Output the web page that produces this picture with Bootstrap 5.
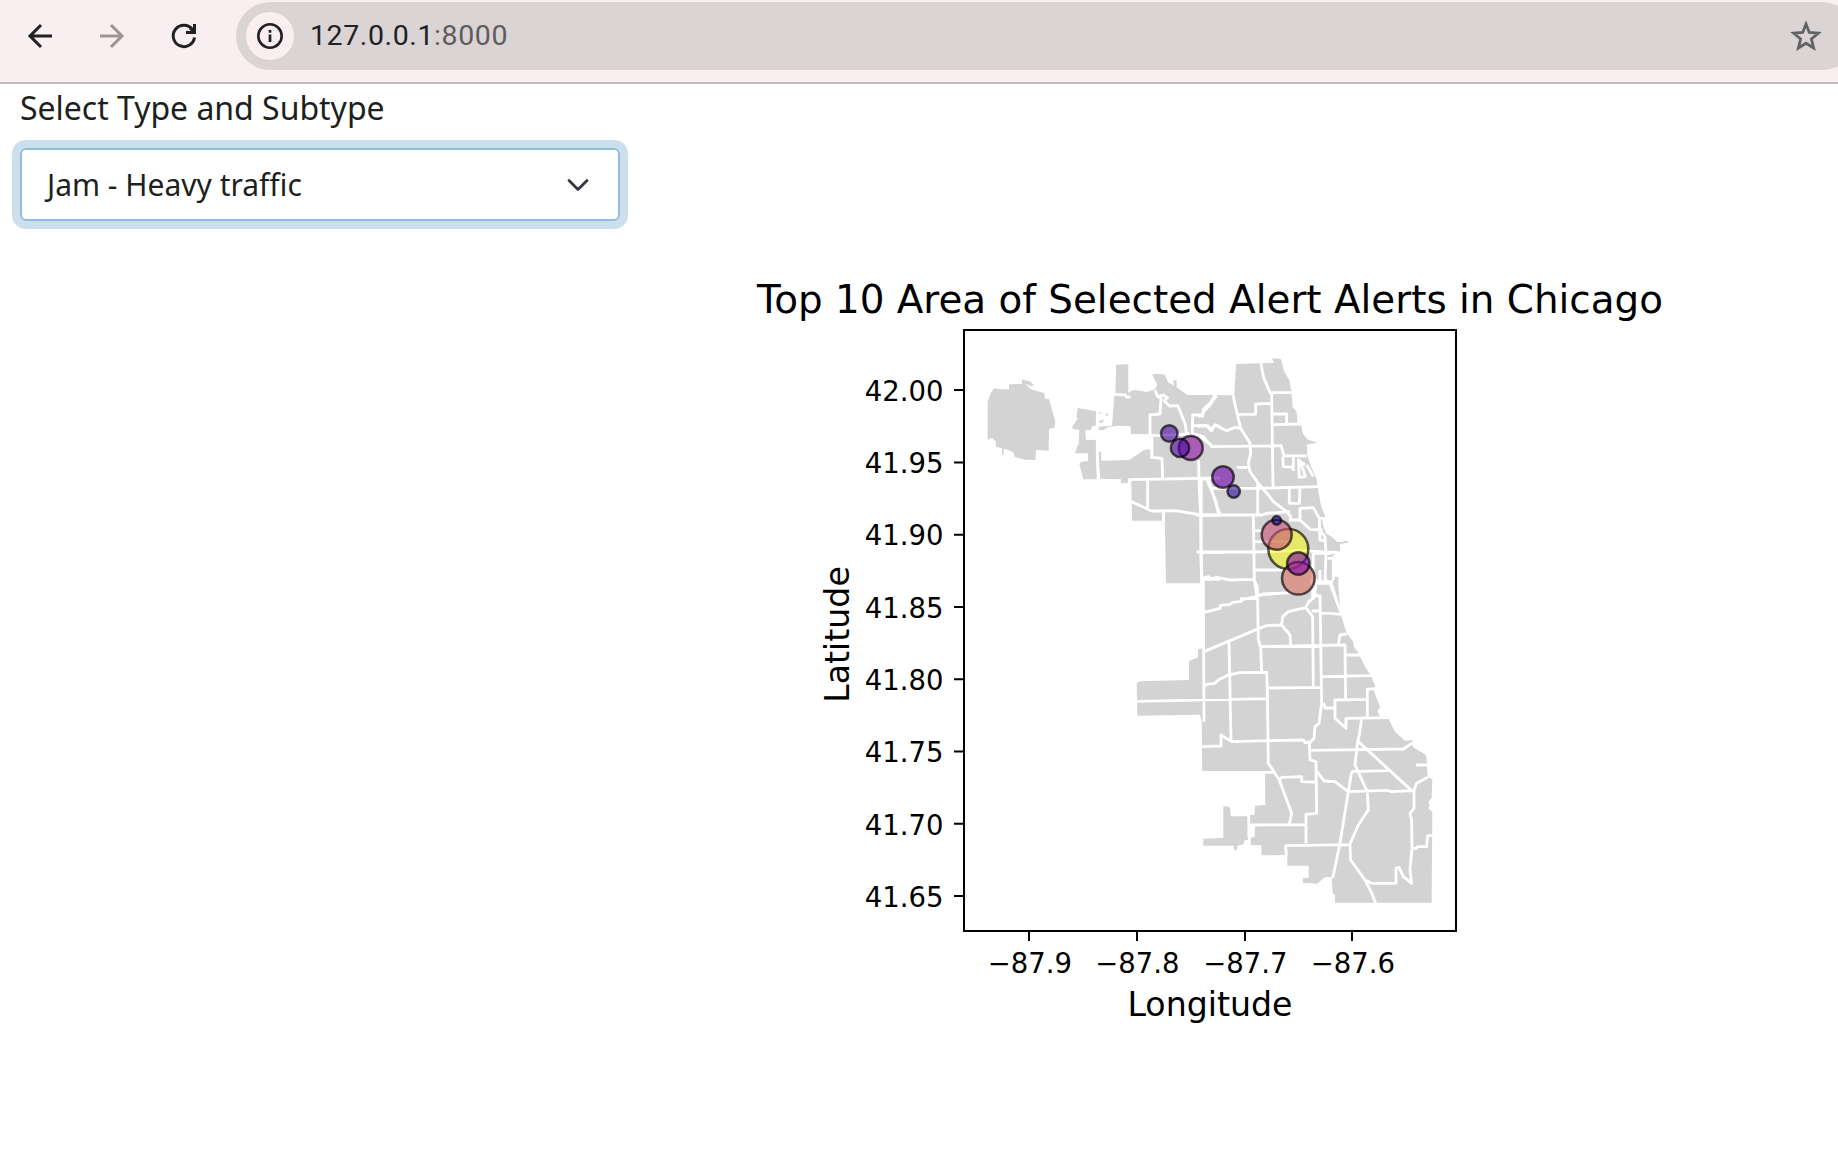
<!DOCTYPE html>
<html lang="en">
<head>
<meta charset="utf-8">
<meta name="viewport" content="width=device-width, initial-scale=1">
<title>127.0.0.1:8000</title>
<link href="https://cdn.jsdelivr.net/npm/bootstrap@5.3.0/dist/css/bootstrap.min.css" rel="stylesheet">
<style>
body{background:#fff;color:#1d1f21;font-family:"Noto Sans","Open Sans",sans-serif;width:1838px;height:1150px;overflow:hidden}
.toolbar{height:84px;background:#f9eff0;border-bottom:2px solid #c2bcbc;padding:2px 0 0 20px;overflow:hidden}
.tool-icon{width:40px;height:40px;margin-top:14px;flex:none}
.tool-next{margin-left:32px}
.address{width:1620px;height:68px;border-radius:34px;background:#dad4d4;flex:none;margin-left:32px;padding:0 34px 0 10px}
.site-info{width:48px;height:48px;background:#f9eff0;flex:none}
.url-text{font:28.500px/34px Roboto,sans-serif;letter-spacing:.6px;margin-left:16px;color:#202124}
.url-text span{color:#5f5c5d}
.type-label{font-size:32px;line-height:44px;padding-left:20px;margin-top:2px;letter-spacing:-.02px}
.type-select{width:600px;height:73px;margin:18px 0 0 20px;border:2px solid #8fbcdf;border-radius:6px;box-shadow:0 0 0 8px #ccdfed;font-size:30px;padding:0 29px 0 25px}
.map-plot{display:block;margin:49px 0 0 740px;font-family:"DejaVu Sans",sans-serif}
.land{fill:#d3d3d3}
.bounds{fill:none;stroke:#fff;stroke-width:8.500;stroke-linejoin:round}
.bubbles{stroke:#000;stroke-width:2.500;fill-opacity:.6;stroke-opacity:.65}
</style>
<script src="https://cdn.jsdelivr.net/npm/bootstrap@5.3.0/dist/js/bootstrap.bundle.min.js"></script>
</head>
<body>
<header class="toolbar d-flex align-items-start">
  <svg class="tool-icon" viewBox="20 16 40 40" fill="none" stroke="#202124" stroke-width="3"><path d="M52 36H30M41 25 30 36l11 11"/></svg>
  <svg class="tool-icon tool-next" viewBox="92 16 40 40" fill="none" stroke="#9b9596" stroke-width="3"><path d="M100 36h22M111 25l11 11-11 11"/></svg>
  <svg class="tool-icon tool-next" viewBox="164 16 40 40" fill="none" stroke="#202124" stroke-width="3"><path d="M194.500 37.500A10.700 10.700 0 1 1 192.500 29.500M194.500 24v8.500H186M190 28l4 4"/></svg>
  <div class="address d-flex align-items-center">
    <div class="site-info rounded-circle d-flex align-items-center justify-content-center">
      <svg width="28" height="28" viewBox="0 0 28 28" fill="none" stroke="#202124"><circle cx="14" cy="14" r="11.700" stroke-width="2.600"/><path d="M14 12.500V20M14 8v2.700" stroke-width="2.700"/></svg>
    </div>
    <div class="url-text">127.0.0.1<span>:8000</span></div>
    <svg class="ms-auto" width="32" height="32" viewBox="0 0 32 32" fill="none" stroke="#5f6363" stroke-width="2.800"><path d="m16 4 3.300 8.500 9 .7-6.900 5.800 2.200 9L16 23.200 8.400 28l2.200-9-6.900-5.800 9-.7z"/></svg>
  </div>
</header>
<main>
  <div class="type-label">Select Type and Subtype</div>
  <div class="type-select d-flex align-items-center justify-content-between" role="combobox" tabindex="0">
    <span>Jam - Heavy traffic</span>
    <svg width="22" height="14" viewBox="0 0 22 14" fill="none" stroke="#343a40" stroke-width="2.800" stroke-linecap="round" stroke-linejoin="round"><path d="m2 2.500 9 9 9-9"/></svg>
  </div>
  <svg class="map-plot" width="960" height="770" viewBox="740 270 960 770">
    <g transform="scale(.33333)">
      <g class="land">
        <g transform="translate(2880 990)">
          <path d="M83 213 92 190 102 175 122 178 147 178 147 163 186 162 186 148 212 155 222 166 213 168 196 161 212 178 253 189 255 206 267 206 286 275 283 293 267 296 266 362 228 359 226 390 194 389 164 381 161 368 145 360 131 357 131 375 126 374 126 355 108 350 107 334 96 323 83 329Z"/>
          <path d="M353 234 410 244 410 285 395 290 393 300 376 300 378 329 408 330 410 448 370 448 358 402 364 395 384 393 384 370 345 370 356 340 358 300 340 298 336 292 354 265 349 262ZM415 362 423 366 424 392 508 390 552 360 571 358 571 386 603 388 603 444 505 447 503 460 483 460 483 448 420 446ZM468 104 505 103 505 190 515 182 525 180 560 186 585 178 600 200 600 316 513 313 511 289 475 287 445 291 430 300 412 300 412 290 456 287 463 200 466 192 468 130ZM416 246 427 249 418 252ZM440 250 445 251 443 258 436 256ZM416 273 432 269 429 277 418 279Z"/>
          <path d="M576 132 614 133 625 158 642 165 640 150 650 152 650 172 682 195 790 196 790 790 728 780 722 760 618 760 614 545 606 545 606 572 516 572 514 450 606 445 603 388 578 385 572 318 572 255 603 250 603 205 590 190 582 180 592 165Z"/>
        </g>
        <path transform="translate(3600 1020)" d="M-10 166 103 166 108 72 183 70 222 68 216 55 243 57 252 93 268 120 274 155 278 200 290 215 292 245 304 258 308 280 322 298 351 308 320 314 322 345 335 385 350 418 356 460 364 500 376 530 366 545 378 580 397 592 412 606 430 606 431 602 445 604 444 608 420 612 420 640 400 645 398 720 413 780 413 800 10 800 10 725-10 725Z"/>
        <path transform="translate(3360 1740)" d="M250-10 250 205 234 207 234 232 207 243 207 300 60 304 50 310 52 407 240 404 245 425 247 577 435 576 436 675 405 677 404 705 385 705 380 709 333 709 330 683 322 679 310 679 310 774 250 776 250 797 341 797 343 811 350 811 353 797 370 793 375 780 384 780 384 705 390 705 390 735 405 738 404 770 392 773 392 795 424 796 425 826 502 825 502 857 566 857 566 893 549 895 549 910 572 909 590 912 615 892 635 892 638 940 645 945 645 968 935 968 937 695 925 685 929 675 925 665 935 655 937 598 923 592 920 540 918 525 880 502 875 490 880 480 855 482 825 455 805 415 780 410 773 395 780 380 768 350 760 328 766 318 752 285 735 260 715 218 702 200 700 185 680 160 663 105 655 20 655-10Z"/>
      </g>
      <g class="bounds">
        <path transform="translate(2880 990)" d="M463 193 496 195 500 201 512 201M592 198 603 205 600 252 570 255 570 310 576 320 576 382 606 385 608 443M412 245V395L417 448M505 449 780 444M563 452V538M514 515 575 543 645 542 725 555 780 556M612 545 610 572M585 180 593 200 610 195 622 203 613 212 628 228 653 227 665 255 675 280 680 312M513 317 600 316 690 312M716 390 717 450 722 555 724 700 728 790M770 196 760 210 750 225 730 245 728 255 698 255 697 310 730 320 755 350 780 350M700 287 740 287 752 300 765 285 780 290M742 452 768 515 775 550M725 667H790M728 745 745 740 760 748 780 748"/>
        <path transform="translate(3600 1020)" d="M99 166 110 215 122 265 150 310 152 340 145 370 150 395 175 430 205 465 220 485 260 515 272 530 270 545M270 540 300 540 330 568 368 570M183 70 190 110 210 158 275 158M215 158 219 440M115 223H167V192L215 190M218 222 260 222 260 250M218 254 302 252M45 166 30 190 10 208 8 228-5 228M-10 258 25 258 35 272 45 255 80 272 105 262 122 265M0 290 40 320 243 317 252 347 320 348M248 350 250 380 280 382 280 350M280 375V393M295 360 298 412 316 410 308 385 295 360 315 375M320 375 340 410M110 382H147M-5 415 30 417M25 417 45 480 50 500 60 520M30 445 175 445 355 440M173 430V520M-10 525 185 525 200 520 270 515M4 415 3 640 6 780M160 525 163 720 170 765 170 780M160 572H190M160 605H270M-10 636 160 636 300 632 420 638M163 690H250M268 445V490H298L300 445M300 540V505L340 503 358 535 374 535M358 535 360 600 372 602M360 572 375 590 378 640 375 720M340 640H395M383 655H398M375 715 382 725M400 650V720M10 718 30 718 50 712 90 720 160 718M340 640 338 780M350 725H400M392 725 410 780M360 690V730M120 776 165 776 175 765 240 760"/>
        <path transform="translate(3360 1740)" d="M250-5 252 425M250 98 300 85 302 76 330 73 340 67 365 64 367 58 410 50 430 42 520 38M252 215 410 148 440 137 485 135 488 110 505 95 557 83 567 65 590 45M400-5 412 20 415 180 422 200 425 275M327 187 333 482M422 200 675 195 677 360M252 320 260 313 285 310 295 300 325 285 360 278 440 277 442 330 445 550 478 600 515 700 508 732M50 364 440 356M442 324 605 322M485 135 510 165 512 195M557 83 578 110 580 322M575-5 580 45 600 48 605 370 612 372 615 384 645 384M575 93H600M603 100 630 100 663 103M605 290 755 287M677 225H720M655 192 660 165 680 162M589-5 585 45M590 10 630 10 665 103M645 384 645 360 740 358M645 384V415L678 445V415L805 413M765 326 742 328 742 410M605 370 597 430 585 440 582 475 568 490 570 540 588 545 590 700 558 703 558 790M245 500 303 498 303 465 335 485 445 482 550 480 555 488 568 486M570 511 850 507 880 487M247 577H460M478 600 485 592 545 590 545 605 588 606M588 570 612 603 645 605 685 635 800 631 815 635 880 632M390 735 558 734M499 828 497 797 690 794M725 415 718 465 712 490 705 555 742 635 745 690 715 735 690 792 692 840 735 900 755 938 767 970M712 482 875 632M695 575 685 635 660 790 638 895M695 575 805 572M735 900 755 910 828 910 828 865 837 862 850 890 875 910 870 870 876 805 875 720 870 700 882 685 882 630 890 610 923 592M876 805 890 805 893 800 920 800 923 767 940 767M888 555H924M775 390 789 403M386 705 387 775"/>
      </g>
    </g>
    <g class="bubbles">
      <circle cx="1288.300" cy="549" r="20" fill="#f0f921"/>
      <circle cx="1298.300" cy="578.300" r="16.300" fill="#dc7560"/>
      <circle cx="1276.700" cy="534.700" r="15" fill="#cc5078"/>
      <circle cx="1190.700" cy="447.900" r="12" fill="#8f0da4"/>
      <circle cx="1298.300" cy="563.500" r="11.200" fill="#7e03a8"/>
      <circle cx="1223" cy="477" r="10.800" fill="#6a00a8"/>
      <circle cx="1180" cy="447.900" r="9.200" fill="#4b03a1"/>
      <circle cx="1169.300" cy="433.500" r="8.300" fill="#4b03a1"/>
      <circle cx="1233.700" cy="491.500" r="6.200" fill="#2c0594"/>
      <circle cx="1276.700" cy="520.400" r="4.300" fill="#0d0887"/>
    </g>
    <path fill="none" stroke="#000" stroke-width="2" d="M964 330H1456V931H964ZM954 390h10M954 462.500h10M954 534.800h10M954 607h10M954 679.200h10M954 751.500h10M954 823.800h10M954 896h10M1029 931v10M1137 931v10M1245 931v10M1352 931v10"/>
    <text x="1210" y="312.700" font-size="39" text-anchor="middle" textLength="906" lengthAdjust="spacingAndGlyphs">Top 10 Area of Selected Alert Alerts in Chicago</text>
    <g font-size="27.500" text-anchor="end">
      <text x="943.500" y="400.500">42.00</text><text x="943.500" y="472.900">41.95</text><text x="943.500" y="545.200">41.90</text><text x="943.500" y="617.500">41.85</text><text x="943.500" y="689.800">41.80</text><text x="943.500" y="762.200">41.75</text><text x="943.500" y="834.500">41.70</text><text x="943.500" y="906.800">41.65</text>
    </g>
    <g font-size="27.500" text-anchor="middle">
      <text x="1029.800" y="972.700">−87.9</text><text x="1137.300" y="972.700">−87.8</text><text x="1245.300" y="972.700">−87.7</text><text x="1352.800" y="972.700">−87.6</text>
    </g>
    <text x="1210" y="1015.700" font-size="33.200" text-anchor="middle">Longitude</text>
    <text transform="translate(849 634.500) rotate(-90)" font-size="33.200" text-anchor="middle">Latitude</text>
  </svg>
</main>
</body>
</html>
